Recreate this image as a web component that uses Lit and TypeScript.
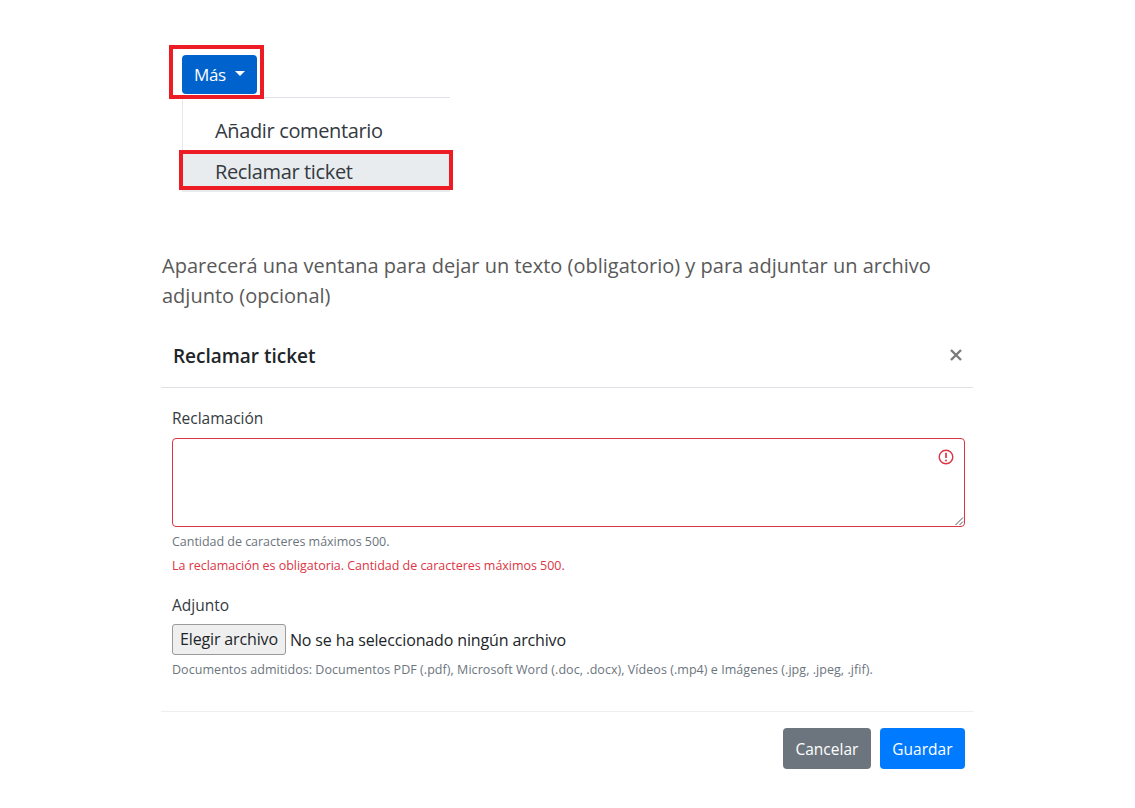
import { LitElement, html, css } from "lit";
import { customElement } from "lit/decorators.js";

@customElement("app-root")
export class AppRoot extends LitElement {
  static styles = css`
    :host {
      display: block;
      width: 1135px;
      height: 808px;
      overflow: hidden;
      background: #fff;
      font-family: "Open Sans", "Noto Sans", sans-serif;
      color: #212529;
    }
    .page {
      padding: 55px 161px 0 161px;
    }
    .menu {
      position: relative;
      margin-left: 21px;
      width: 268px;
    }
    .more {
      display: flex;
      align-items: center;
      gap: 9px;
      width: 75px;
      height: 39px;
      box-sizing: border-box;
      padding-left: 12px;
      background: #0062cc;
      color: #fff;
      border-radius: 4px;
      font-size: 17px;
      letter-spacing: -0.4px;
    }
    .caret {
      width: 0;
      height: 0;
      border-left: 5px solid transparent;
      border-right: 5px solid transparent;
      border-top: 5px solid #fff;
      margin-top: -3px;
    }
    .list {
      margin-top: 3px;
      border-top: 1px solid #dee2e6;
      border-left: 1px solid #e6e8ea;
      height: 93px;
      box-sizing: border-box;
      padding-top: 12px;
    }
    .item {
      height: 41px;
      box-sizing: border-box;
      padding-left: 32px;
      font-size: 20px;
      line-height: 41px;
      letter-spacing: -0.36px;
      color: #343a40;
    }
    .item.active {
      background: #e9ecef;
      margin-left: -1px;
      padding-left: 33px;
    }
    .mark {
      position: absolute;
      box-sizing: border-box;
      border: 4px solid #ed1c24;
    }
    .mark.btn {
      left: -13px;
      top: -10px;
      width: 95px;
      height: 54px;
    }
    .mark.row {
      left: -3px;
      top: 95px;
      width: 274px;
      height: 40px;
    }
    .intro {
      margin: 61px 0 0 1px;
      font-size: 20px;
      line-height: 30px;
      color: #595959;
      width: 800px;
    }
    .modal {
      width: 812px;
      margin-top: 15px;
    }
    .modal-head {
      display: flex;
      justify-content: space-between;
      align-items: center;
      height: 62px;
      box-sizing: border-box;
      padding: 0 10px 2px 12px;
      border-bottom: 1px solid #dee2e6;
    }
    .modal-title {
      font-size: 19px;
      font-weight: 600;
      letter-spacing: -0.02px;
    }
    .close {
      width: 14px;
      height: 14px;
      margin-top: -2px;
      display: block;
    }
    .modal-body {
      padding: 19px 8px 0 11px;
      height: 324px;
      box-sizing: border-box;
      border-bottom: 1px solid #eceef0;
    }
    label {
      display: block;
      font-size: 15.5px;
      line-height: 22px;
      color: #343a40;
    }
    .field {
      position: relative;
      margin-top: 9px;
      height: 89px;
      box-sizing: border-box;
      border: 1px solid #dc3545;
      border-radius: 4px;
    }
    .alert {
      position: absolute;
      top: 10px;
      right: 10px;
      width: 16px;
      height: 16px;
      display: block;
    }
    .grip {
      position: absolute;
      right: 0;
      bottom: 0;
      width: 10px;
      height: 10px;
      display: block;
    }
    .hint {
      font-size: 12.5px;
      line-height: 18px;
      letter-spacing: -0.03px;
      color: #6c757d;
    }
    .hint.first {
      margin-top: 6px;
    }
    .hint.error {
      margin-top: 6px;
      color: #dc3545;
    }
    .attach {
      margin-top: 19px;
    }
    .file {
      display: flex;
      align-items: center;
      gap: 4px;
      margin-top: 8px;
      font-size: 16px;
      letter-spacing: -0.14px;
      color: #212529;
    }
    .file-btn {
      height: 31px;
      box-sizing: border-box;
      padding: 0 7px;
      line-height: 29px;
      background: #efefef;
      border: 1px solid #9a9a9a;
      border-radius: 3px;
    }
    .hint.docs {
      margin-top: 6px;
      letter-spacing: 0.05px;
      white-space: nowrap;
    }
    .modal-foot {
      display: flex;
      justify-content: flex-end;
      gap: 9px;
      padding: 16px 8px 0 0;
    }
    .action {
      height: 41px;
      box-sizing: border-box;
      padding: 0 12.5px;
      border-radius: 4px;
      color: #fff;
      font-size: 15.5px;
      line-height: 42px;
    }
    .cancel {
      background: #6c757d;
    }
    .save {
      background: #007bff;
    }
  `;

  render() {
    return html`
      <div class="page">
        <div class="menu">
          <div class="more">Más <span class="caret"></span></div>
          <div class="list">
            <div class="item">Añadir comentario</div>
            <div class="item active">Reclamar ticket</div>
          </div>
          <div class="mark btn"></div>
          <div class="mark row"></div>
        </div>

        <div class="intro">
          Aparecerá una ventana para dejar un texto (obligatorio) y para
          adjuntar un archivo adjunto (opcional)
        </div>

        <div class="modal">
          <div class="modal-head">
            <span class="modal-title">Reclamar ticket</span>
            <svg class="close" viewBox="0 0 14 14">
              <path d="M2 2 12 12M12 2 2 12" stroke="#7b7b7b" stroke-width="2.4" fill="none" />
            </svg>
          </div>

          <div class="modal-body">
            <label>Reclamación</label>
            <div class="field">
              <svg class="alert" viewBox="0 0 16 16">
                <circle cx="8" cy="8" r="6.8" fill="none" stroke="#dc3545" stroke-width="1.4" />
                <path d="M8 3.8v5.2" stroke="#dc3545" stroke-width="1.7" fill="none" />
                <circle cx="8" cy="11.6" r="1" fill="#dc3545" />
              </svg>
              <svg class="grip" viewBox="0 0 10 10">
                <path d="M1.5 9 9 1.5M5.5 9 9 5.5" stroke="#555" stroke-width="1" fill="none" />
              </svg>
            </div>
            <div class="hint first">Cantidad de caracteres máximos 500.</div>
            <div class="hint error">La reclamación es obligatoria. Cantidad de caracteres máximos 500.</div>

            <label class="attach">Adjunto</label>
            <div class="file">
              <span class="file-btn">Elegir archivo</span>
              <span>No se ha seleccionado ningún archivo</span>
            </div>
            <div class="hint docs">
              Documentos admitidos: Documentos PDF (.pdf), Microsoft Word (.doc, .docx), Vídeos (.mp4) e Imágenes (.jpg, .jpeg, .jfif).
            </div>
          </div>

          <div class="modal-foot">
            <span class="action cancel">Cancelar</span>
            <span class="action save">Guardar</span>
          </div>
        </div>
      </div>
    `;
  }
}
